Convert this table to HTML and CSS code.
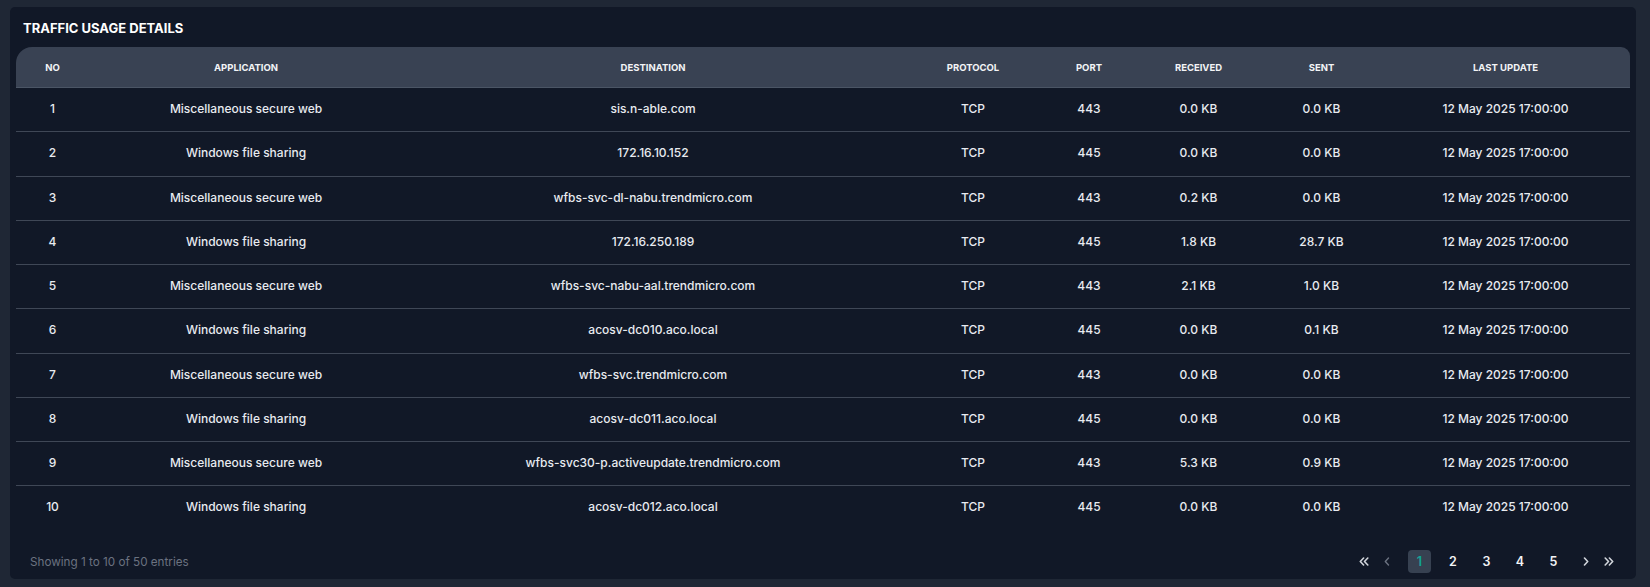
FILE: index.html
```html
<!DOCTYPE html>
<html lang="en">
<head>
<meta charset="utf-8">
<title>Traffic Usage Details</title>
<link rel="stylesheet" href="styles.css">
</head>
<body>
<div class="page">
  <section class="card">
    <h2 class="card-title">TRAFFIC USAGE DETAILS</h2>
    <table class="traffic">
      <colgroup>
        <col class="c-no"><col class="c-app"><col class="c-dest"><col class="c-proto"><col class="c-port"><col class="c-recv"><col class="c-sent"><col class="c-upd">
      </colgroup>
      <thead>
        <tr>
          <th>NO</th><th>APPLICATION</th><th>DESTINATION</th><th>PROTOCOL</th><th>PORT</th><th>RECEIVED</th><th>SENT</th><th>LAST UPDATE</th>
        </tr>
      </thead>
      <tbody>
        <tr><td>1</td><td>Miscellaneous secure web</td><td>sis.n-able.com</td><td>TCP</td><td>443</td><td>0.0 KB</td><td>0.0 KB</td><td>12 May 2025 17:00:00</td></tr>
        <tr><td>2</td><td>Windows file sharing</td><td>172.16.10.152</td><td>TCP</td><td>445</td><td>0.0 KB</td><td>0.0 KB</td><td>12 May 2025 17:00:00</td></tr>
        <tr><td>3</td><td>Miscellaneous secure web</td><td>wfbs-svc-dl-nabu.trendmicro.com</td><td>TCP</td><td>443</td><td>0.2 KB</td><td>0.0 KB</td><td>12 May 2025 17:00:00</td></tr>
        <tr><td>4</td><td>Windows file sharing</td><td>172.16.250.189</td><td>TCP</td><td>445</td><td>1.8 KB</td><td>28.7 KB</td><td>12 May 2025 17:00:00</td></tr>
        <tr><td>5</td><td>Miscellaneous secure web</td><td>wfbs-svc-nabu-aal.trendmicro.com</td><td>TCP</td><td>443</td><td>2.1 KB</td><td>1.0 KB</td><td>12 May 2025 17:00:00</td></tr>
        <tr><td>6</td><td>Windows file sharing</td><td>acosv-dc010.aco.local</td><td>TCP</td><td>445</td><td>0.0 KB</td><td>0.1 KB</td><td>12 May 2025 17:00:00</td></tr>
        <tr><td>7</td><td>Miscellaneous secure web</td><td>wfbs-svc.trendmicro.com</td><td>TCP</td><td>443</td><td>0.0 KB</td><td>0.0 KB</td><td>12 May 2025 17:00:00</td></tr>
        <tr><td>8</td><td>Windows file sharing</td><td>acosv-dc011.aco.local</td><td>TCP</td><td>445</td><td>0.0 KB</td><td>0.0 KB</td><td>12 May 2025 17:00:00</td></tr>
        <tr><td>9</td><td>Miscellaneous secure web</td><td>wfbs-svc30-p.activeupdate.trendmicro.com</td><td>TCP</td><td>443</td><td>5.3 KB</td><td>0.9 KB</td><td>12 May 2025 17:00:00</td></tr>
        <tr><td>10</td><td>Windows file sharing</td><td>acosv-dc012.aco.local</td><td>TCP</td><td>445</td><td>0.0 KB</td><td>0.0 KB</td><td>12 May 2025 17:00:00</td></tr>
      </tbody>
    </table>
    <div class="footer">
      <span class="entries">Showing 1 to 10 of 50 entries</span>
      <nav class="pager">
        <span class="pg-arrow">
          <svg width="10" height="9" viewBox="0 0 10 9"><path d="M4.6 1 1.3 4.5l3.3 3.5M8.8 1 5.5 4.5l3.3 3.5" fill="none" stroke="currentColor" stroke-width="1.6" stroke-linecap="round" stroke-linejoin="round"/></svg>
        </span>
        <span class="pg-arrow disabled">
          <svg width="6" height="9" viewBox="0 0 6 9"><path d="M4.5 1 1.3 4.5l3.2 3.5" fill="none" stroke="currentColor" stroke-width="1.4" stroke-linecap="round" stroke-linejoin="round"/></svg>
        </span>
        <span class="pg-pages">
          <span class="pg-num active">1</span>
          <span class="pg-num">2</span>
          <span class="pg-num">3</span>
          <span class="pg-num">4</span>
          <span class="pg-num">5</span>
        </span>
        <span class="pg-arrow">
          <svg width="6" height="9" viewBox="0 0 6 9"><path d="M1.5 1 4.7 4.5 1.5 8" fill="none" stroke="currentColor" stroke-width="1.6" stroke-linecap="round" stroke-linejoin="round"/></svg>
        </span>
        <span class="pg-arrow">
          <svg width="10" height="9" viewBox="0 0 10 9"><path d="M1.2 1 4.5 4.5 1.2 8M5.4 1 8.7 4.5 5.4 8" fill="none" stroke="currentColor" stroke-width="1.6" stroke-linecap="round" stroke-linejoin="round"/></svg>
        </span>
      </nav>
    </div>
  </section>
</div>
</body>
</html>
```

FILE: styles.css
```css
* { box-sizing: border-box; }

html, body {
  margin: 0;
  padding: 0;
  background: #1f2735;
}

body {
  font-family: Inter, "Noto Sans", sans-serif;
  color: #e5e7eb;
  width: 1650px;
  height: 587px;
  overflow: hidden;
}

.page {
  padding: 7px 14px 8px 10px;
}

.card {
  background: #111827;
  border-radius: 5px;
  height: 572px;
  padding: 0 6px;
  display: flex;
  flex-direction: column;
}

.card-title {
  margin: 0;
  height: 40px;
  padding: 13px 0 0 7px;
  font-size: 13px;
  line-height: 16px;
  font-weight: 700;
  color: #ffffff;
}

.traffic {
  width: 100%;
  border-collapse: separate;
  border-spacing: 0;
  table-layout: fixed;
}

.c-no { width: 73px; }
.c-app { width: 314px; }
.c-dest { width: 500px; }
.c-proto { width: 140px; }
.c-port { width: 92px; }
.c-recv { width: 127px; }
.c-sent { width: 119px; }
.c-upd { width: 249px; }

.traffic th {
  background: #394253;
  height: 41px;
  border-bottom: 1px solid #4b5565;
  font-size: 9.5px;
  font-weight: 700;
  color: #f3f4f6;
  text-align: center;
  padding: 0;
  vertical-align: middle;
}

.traffic th:first-child { border-top-left-radius: 16px; }
.traffic th:last-child { border-top-right-radius: 9px; }

.traffic td {
  height: 44.25px;
  border-bottom: 1px solid #3f4756;
  font-size: 12px;
  font-weight: 500;
  color: #e8ebf0;
  text-align: center;
  padding: 0 0 2px;
  vertical-align: middle;
  white-space: nowrap;
}

.traffic tbody tr:last-child td {
  border-bottom: none;
  height: 43px;
}

.footer {
  margin-top: auto;
  height: 23px;
  margin-bottom: 6px;
  display: flex;
  align-items: center;
  justify-content: space-between;
  padding: 0 15px 0 14px;
}

.entries {
  font-size: 11.7px;
  color: #6b7280;
}

.pager {
  display: flex;
  align-items: center;
  gap: 10px;
}

.pg-arrow {
  width: 13px;
  height: 23px;
  display: flex;
  align-items: center;
  justify-content: center;
  color: #d1d5db;
}

.pg-arrow.disabled { color: #6b7280; }

.pg-pages {
  display: flex;
  align-items: center;
  gap: 10.5px;
  margin: 0 4px 0 5px;
}

.pg-num {
  width: 23px;
  height: 23px;
  display: flex;
  align-items: center;
  justify-content: center;
  font-size: 12.5px;
  font-weight: 600;
  color: #f3f4f6;
  border-radius: 4px;
}

.pg-num.active {
  background: #374151;
  color: #14a396;
}
```
